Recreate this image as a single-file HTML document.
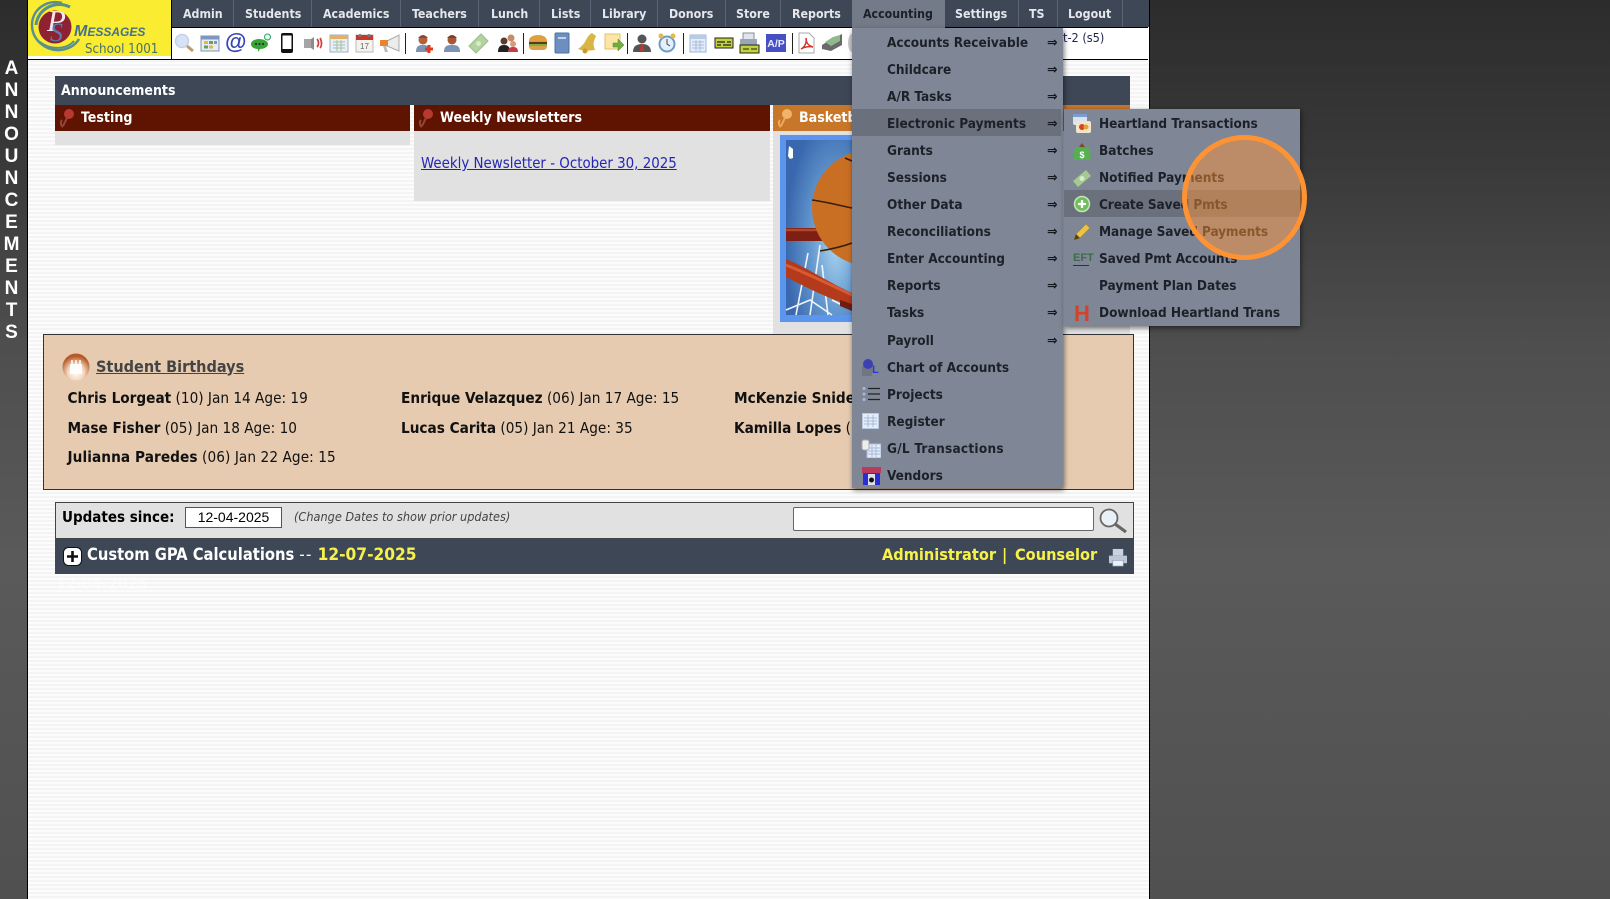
<!DOCTYPE html>
<html><head><meta charset="utf-8"><title>PS Messages</title>
<style>
html,body{margin:0;padding:0;width:1610px;height:899px;overflow:hidden}
body{position:relative;background:linear-gradient(180deg,#2c2c2c 0,#383838 150px,#4e4e4e 344px,#5a5a5a 560px,#505050 899px);font-family:"DejaVu Sans Condensed","DejaVu Sans",sans-serif;font-stretch:condensed;color:#000}
.a,.t,svg{position:absolute}
.t{white-space:nowrap}
.t,svg{filter:blur(.3px)}
.b{font-weight:bold}
.n{top:0;height:27px;line-height:29px;font-size:12.3px;font-weight:bold;color:#e4e7ec}
.s{top:0;width:1px;height:27px;background:#596373}
.v{left:0;width:23px;text-align:center;font:bold 19px "Liberation Sans",sans-serif;color:#fff;height:22px;line-height:22px}
.m{height:27px;line-height:30px;font-size:13.5px;font-weight:bold;color:#1c2028}
.ar{left:1047px;height:27px;line-height:30px;font-size:14px;font-weight:bold;color:#15181e}
.h{top:105px;height:26px;line-height:27px;font-size:14.1px;font-weight:bold;color:#fff}
.nm{font-size:15.2px;height:20px;line-height:20px;color:#111}
.tb{top:32px;width:22px;height:22px}
.sep{top:33px;width:1px;height:21px;background:#222}
</style></head><body>

<!-- sidebar -->
<div class="t v" style="top:58px">A</div><div class="t v" style="top:80px">N</div><div class="t v" style="top:102px">N</div><div class="t v" style="top:124px">O</div><div class="t v" style="top:146px">U</div><div class="t v" style="top:168px">N</div><div class="t v" style="top:190px">C</div><div class="t v" style="top:212px">E</div><div class="t v" style="top:234px">M</div><div class="t v" style="top:256px">E</div><div class="t v" style="top:278px">N</div><div class="t v" style="top:300px">T</div><div class="t v" style="top:322px">S</div>

<!-- main panel -->
<div class="a" style="left:27px;top:0;width:1121px;height:899px;border-left:1px solid #000;border-right:1px solid #000;background:repeating-linear-gradient(180deg,#f4f4f4 0,#f4f4f4 2px,#fcfcfc 2px,#fcfcfc 4px)"></div>

<!-- logo -->
<div class="a" style="left:28px;top:0;width:143px;height:56px;background:#f9ec31"></div>
<div class="a" style="left:28px;top:56px;width:1120px;height:3px;background:#fff"></div>
<svg style="left:28px;top:0" width="143" height="56" viewBox="0 0 143 56">
<path d="M34 3C18-1 4 10 4 25c0 15 14 26 28 25 10-1 16-6 19-11" fill="none" stroke="#5a8f8c" stroke-width="2.5"/>
<path d="M42 7C28 0 10 8 8 25" fill="none" stroke="#5a8f8c" stroke-width="3"/>
<path d="M12 42c10 8 26 8 34-1" fill="none" stroke="#5a8f8c" stroke-width="2"/>
<circle cx="27" cy="27" r="16.5" fill="#8e2232"/>
<text x="19" y="31" font-family="Liberation Serif,serif" font-style="italic" font-size="31" fill="#f3e6ea">P</text>
<text x="22" y="41" font-family="Liberation Serif,serif" font-style="italic" font-size="26" fill="#5a7db5">S</text>
<text x="46" y="36" font-family="Liberation Sans,sans-serif" font-style="italic" font-weight="bold" font-size="16" fill="#457091">M<tspan font-size="12">ESSAGES</tspan></text>
<text x="57" y="53" font-family="DejaVu Sans Condensed,DejaVu Sans,sans-serif" font-stretch="condensed" font-size="13.2" fill="#47706a">School 1001</text>
</svg>

<!-- nav -->
<div class="a" style="left:171px;top:0;width:977px;height:27px;background:#3e4755;border-left:1px solid #000"></div>
<div class="a" style="left:171px;top:27px;width:977px;height:1px;background:#000"></div>
<div class="a" style="left:171px;top:28px;width:977px;height:31px;background:#fff;border-left:1px solid #000"></div>
<div class="a" style="left:28px;top:59px;width:1120px;height:1px;background:#000"></div>
<div class="a" style="left:852px;top:0;width:93px;height:28px;background:#747b88"></div>

<div class="t n" style="left:183px">Admin</div><div class="a s" style="left:233px"></div>
<div class="t n" style="left:245px">Students</div><div class="a s" style="left:311px"></div>
<div class="t n" style="left:323px">Academics</div><div class="a s" style="left:400px"></div>
<div class="t n" style="left:412px">Teachers</div><div class="a s" style="left:478px"></div>
<div class="t n" style="left:491px">Lunch</div><div class="a s" style="left:539px"></div>
<div class="t n" style="left:551px">Lists</div><div class="a s" style="left:590px"></div>
<div class="t n" style="left:602px">Library</div><div class="a s" style="left:657px"></div>
<div class="t n" style="left:669px">Donors</div><div class="a s" style="left:725px"></div>
<div class="t n" style="left:736px">Store</div><div class="a s" style="left:780px"></div>
<div class="t n" style="left:792px">Reports</div>
<div class="t n" style="left:863px;color:#1c2028">Accounting</div>
<div class="t n" style="left:955px">Settings</div><div class="a s" style="left:1018px"></div>
<div class="t n" style="left:1029px">TS</div><div class="a s" style="left:1057px"></div>
<div class="t n" style="left:1068px">Logout</div><div class="a s" style="left:1122px"></div>
<div class="t" style="left:1063px;top:29px;height:18px;line-height:18px;font-size:12.600px;color:#1d2550">t-2 (s5)</div>

<!-- toolbar icons -->
<svg class="tb" style="left:173px" viewBox="0 0 22 22"><circle cx="9" cy="9" r="6.5" fill="#d5e3f5" stroke="#c3d2e6" stroke-width="1.500"/><path d="M14 14l6 5" stroke="#c59a6a" stroke-width="3"/></svg>
<svg class="tb" style="left:199px" viewBox="0 0 22 22"><rect x="2" y="4" width="18" height="15" fill="#e6edf7" stroke="#7d93b5"/><rect x="2" y="4" width="18" height="3.5" fill="#7f97bd"/><rect x="5" y="9" width="4" height="3" fill="#e7b93a"/><rect x="10" y="9" width="4" height="3" fill="#5fa35f"/><rect x="15" y="9" width="3" height="3" fill="#7f97bd"/><rect x="5" y="13.5" width="4" height="3" fill="#5fa35f"/><rect x="10" y="13.5" width="4" height="3" fill="#e7b93a"/></svg>
<div class="t" style="left:225px;top:28px;font:bold 22px/28px 'Liberation Sans',sans-serif;color:#3643b5">@</div>
<svg class="tb" style="left:250px" viewBox="0 0 22 22"><path d="M1 12c0-3 4-5 8-5s9 2 9 5-4 5-8 5l-2 3v-3c-4 0-7-2-7-5z" fill="#3aa336"/><circle cx="6" cy="12" r="1" fill="#123"/><circle cx="9.5" cy="12" r="1" fill="#123"/><circle cx="13" cy="12" r="1" fill="#123"/><circle cx="17.5" cy="5" r="3" fill="#dfe" stroke="#396"/></svg>
<svg class="tb" style="left:276px" viewBox="0 0 22 22"><rect x="5" y="1" width="12" height="20" rx="2" fill="#111"/><rect x="6.5" y="3.5" width="9" height="13.5" fill="#fff"/></svg>
<svg class="tb" style="left:302px" viewBox="0 0 22 22"><path d="M2 7h7v9H2z" fill="#a5a5a5"/><path d="M9 7l3-2v13l-3-2z" fill="#8c8c8c"/><path d="M15 7c2 2 2 6 0 8M18 6c2 3 2 8 0 10" fill="none" stroke="#d0403e" stroke-width="1.700"/></svg>
<svg class="tb" style="left:328px" viewBox="0 0 22 22"><rect x="2" y="3" width="18" height="17" fill="#e8eff8" stroke="#9db0c9"/><rect x="2" y="3" width="18" height="4" fill="#e3b06c"/><path d="M5 10h12M5 13h12M5 16h12M9 8v11M13 8v11" stroke="#a5c0a0"/></svg>
<svg class="tb" style="left:353px" viewBox="0 0 22 22"><rect x="3" y="3" width="17" height="17" fill="#f6f3ef" stroke="#bbb"/><rect x="3" y="3" width="17" height="5" fill="#c8372d"/><circle cx="7" cy="3.5" r="1.500" fill="#777"/><circle cx="16" cy="3.5" r="1.500" fill="#777"/><text x="7" y="17" font-size="8" fill="#666" font-family="Liberation Sans,sans-serif">17</text></svg>
<svg class="tb" style="left:379px" viewBox="0 0 22 22"><path d="M8 9l12-6v16L8 14z" fill="#ececec" stroke="#aaa"/><path d="M1 8h8v6H1z" fill="#e8842c"/><path d="M4 14l2 6h3l-2-6z" fill="#bbb"/></svg>
<div class="a sep" style="left:405px"></div>
<svg class="tb" style="left:413px" viewBox="0 0 22 22"><circle cx="10" cy="8" r="4.500" fill="#b4603c"/><path d="M5 6q5-6 10 0z" fill="#8a4a30"/><path d="M3 20c0-6 3-7 7-7s7 1 7 7z" fill="#7b93b5"/><path d="M16 13v8M12 17h8" stroke="#e03a25" stroke-width="3"/></svg>
<svg class="tb" style="left:441px" viewBox="0 0 22 22"><circle cx="11" cy="8" r="4.500" fill="#a8583a"/><path d="M6 6q5-6 10 0z" fill="#7a4028"/><path d="M3 20c0-6 3-7 8-7s8 1 8 7z" fill="#7b93b5"/></svg>
<svg class="tb" style="left:467px" viewBox="0 0 22 22"><path d="M2 14L14 2l7 7-12 12z" fill="#b3d3a0" stroke="#9cbd8a"/><circle cx="11.5" cy="11.5" r="2.500" fill="#d6ebc8"/></svg>
<svg class="tb" style="left:497px" viewBox="0 0 22 22"><circle cx="7" cy="9" r="3.5" fill="#5d3b2a"/><path d="M1 20c0-5 2-7 6-7s6 2 6 7z" fill="#222"/><circle cx="14" cy="6" r="3.5" fill="#c98a66"/><circle cx="16" cy="12" r="3" fill="#d99a7a"/><path d="M11 20c0-4 2-5 5-5s5 1 5 5z" fill="#c83a4a"/></svg>
<div class="a sep" style="left:523px"></div>
<svg class="tb" style="left:527px" viewBox="0 0 22 22"><path d="M2 9c0-4 4-6 9-6s9 2 9 6z" fill="#e0a040"/><rect x="2" y="9.500" width="18" height="2.500" fill="#5c3a1c"/><rect x="2" y="12" width="18" height="2" fill="#7fae3c"/><path d="M2 14h18c0 3-2 4-4 4H6c-2 0-4-1-4-4z" fill="#dca04a"/></svg>
<svg class="tb" style="left:551px" viewBox="0 0 22 22"><rect x="4" y="1" width="14" height="20" rx="1" fill="#6d8fbf" stroke="#50709f"/><rect x="7" y="5" width="8" height="2" fill="#c3d3e8"/></svg>
<svg class="tb" style="left:576px" viewBox="0 0 22 22"><path d="M16 1l4 3-2 5c-1 3 0 6 1 9C13 19 7 19 2 17c3-2 6-5 8-9s4-6 6-7z" fill="#d9b544"/><circle cx="9" cy="19" r="2.500" fill="#c99a2a"/></svg>
<svg class="tb" style="left:603px" viewBox="0 0 22 22"><rect x="2" y="2" width="15" height="15" fill="#fbe6a6" stroke="#e0c070"/><path d="M10 11h5V7l6 6-6 6v-4h-5z" fill="#6fae3f" stroke="#4d8a2a" stroke-width=".5"/></svg>
<div class="a sep" style="left:627px"></div>
<svg class="tb" style="left:631px" viewBox="0 0 22 22"><circle cx="11" cy="7" r="4.500" fill="#555"/><path d="M2 20c0-6 4-8 9-8s9 2 9 8z" fill="#555"/><path d="M10 12h2l1 7h-4z" fill="#c0392b"/></svg>
<svg class="tb" style="left:656px" viewBox="0 0 22 22"><circle cx="11" cy="12" r="7.500" fill="#e6f0fa" stroke="#6d9bc7" stroke-width="2"/><path d="M11 7v5l3 2" stroke="#345" fill="none"/><circle cx="5" cy="4" r="2.500" fill="#e3b94a"/><circle cx="17" cy="4" r="2.500" fill="#e3b94a"/></svg>
<div class="a sep" style="left:683px"></div>
<svg class="tb" style="left:687px" viewBox="0 0 22 22"><rect x="3" y="3" width="16" height="17" fill="#e4edf9" stroke="#9db3d3"/><rect x="3" y="3" width="16" height="4" fill="#b9cce6"/><path d="M5 10h12M5 13h12M5 16h12M9 8v11M13 8v11" stroke="#a9bedb"/></svg>
<svg class="tb" style="left:713px" viewBox="0 0 22 22"><rect x="2" y="6" width="18" height="10" fill="#c2d23d" stroke="#222"/><path d="M4 10h8M14 10h4M4 13h4M10 13h8" stroke="#222" stroke-width="1.200"/></svg>
<svg class="tb" style="left:738px" viewBox="0 0 22 22"><rect x="5" y="1" width="11" height="9" fill="#dfe6ef" stroke="#889"/><rect x="2" y="7" width="17" height="7" fill="#9aa6b5"/><rect x="2" y="13" width="19" height="8" fill="#c2d23d" stroke="#222"/><path d="M5 17h6M13 17h6" stroke="#222"/></svg>
<svg class="tb" style="left:765px" viewBox="0 0 22 22"><rect x="1" y="2" width="20" height="18" fill="#4650c4"/><text x="11" y="15" text-anchor="middle" font-family="Liberation Sans,sans-serif" font-weight="bold" font-size="10.500" fill="#e8eaff">A/P</text></svg>
<div class="a sep" style="left:792px"></div>
<svg class="tb" style="left:795px" viewBox="0 0 22 22"><path d="M4 1h10l5 5v15H4z" fill="#fff" stroke="#aaa"/><path d="M6 17c4-2 6-7 5-11 0 5 3 8 7 9-4-1-9 0-12 2z" fill="none" stroke="#d0342c" stroke-width="1.500"/></svg>
<svg class="tb" style="left:821px" viewBox="0 0 22 22"><path d="M1 13l8-5 12-6v11l-11 6-9-2z" fill="#6a6a6a"/><path d="M4 10l8-5 7-2v6l-9 5z" fill="#8fb98a"/></svg>
<div class="a" style="left:848px;top:34px;width:8px;height:18px;border-radius:50%;background:#c9c9c9"></div>

<!-- announcements -->
<div class="a" style="left:55px;top:76px;width:1075px;height:29px;background:#3e4755"></div>
<div class="t b" style="left:61px;top:77px;height:29px;line-height:29px;font-size:14px;color:#fff">Announcements</div>
<div class="a" style="left:55px;top:105px;width:355px;height:26px;background:#5e1400"></div>
<div class="a" style="left:55px;top:131px;width:355px;height:14px;background:#e1e1e1"></div>
<div class="a" style="left:414px;top:105px;width:356px;height:26px;background:#5e1400"></div>
<div class="a" style="left:414px;top:131px;width:356px;height:70px;background:#e1e1e1"></div>
<div class="a" style="left:773px;top:105px;width:357px;height:26px;background:#c7762a"></div>
<div class="a" style="left:773px;top:131px;width:357px;height:203px;background:#e1e1e1"></div>
<svg style="left:59px;top:107px" width="16" height="22" viewBox="0 0 16 22"><circle cx="10" cy="7" r="5" fill="#b8392d"/><path d="M8 11l-4 8M3 13c-2 2-1 6 1 7" stroke="#93453a" stroke-width="2" fill="none"/></svg>
<svg style="left:418px;top:107px" width="16" height="22" viewBox="0 0 16 22"><circle cx="10" cy="7" r="5" fill="#b8392d"/><path d="M8 11l-4 8M3 13c-2 2-1 6 1 7" stroke="#93453a" stroke-width="2" fill="none"/></svg>
<svg style="left:777px;top:107px" width="16" height="22" viewBox="0 0 16 22"><circle cx="10" cy="7" r="5" fill="#f1b26a"/><path d="M8 11l-4 8M3 13c-2 2-1 6 1 7" stroke="#f0a75a" stroke-width="2" fill="none"/></svg>
<div class="t h" style="left:81px">Testing</div>
<div class="t h" style="left:440px">Weekly Newsletters</div>
<div class="t h" style="left:799px;width:53px;overflow:hidden">Basketball</div>
<div class="t" style="left:421px;top:153px;height:20px;line-height:20px;font-size:14.9px;color:#2525b5;text-decoration:underline">Weekly Newsletter - October 30, 2025</div>

<!-- basketball image -->
<svg style="left:780px;top:135px" width="72" height="187" viewBox="0 0 72 187">
<defs><radialGradient id="g" cx="75%" cy="60%" r="75%"><stop offset="0" stop-color="#a8d4ee"/><stop offset=".5" stop-color="#6498cf"/><stop offset="1" stop-color="#3a68ae"/></radialGradient></defs>
<rect width="72" height="187" fill="#5b95ee"/>
<rect x="6" y="5" width="66" height="175" fill="url(#g)"/>
<path d="M6 93h40v13H6z" fill="#7d1f12"/>
<path d="M6 95h40" stroke="#b2452a" stroke-width="2.500"/>
<path d="M28 118l-12 62M40 110L30 180M42 130l6 50M6 175l24-10 22 15M52 165l20 10" stroke="#eef4f8" stroke-width="1.600" fill="none"/>
<circle cx="90" cy="73" r="58" fill="#c96f24"/>
<path d="M32 65c15 2 30 6 40 8M40 116c12-2 24-5 32-8M65 23l7 3" stroke="#3a1d0a" stroke-width="1.600" fill="none"/>
<path d="M6 124c20 8 40 22 66 34v13C46 163 22 150 6 142z" fill="#b33a1b"/>
<path d="M6 130c20 8 45 20 66 30" stroke="#d85a32" stroke-width="3" fill="none"/>
<path d="M60 165l12 4v7l-12-5z" fill="#6f1d0f"/>
<path d="M9 11l4 3v9l-3 1-2-3z" fill="#fff"/>
</svg>

<!-- birthdays -->
<div class="a" style="left:43px;top:334px;width:1089px;height:154px;background:#e6cbb0;border:1px solid #333"></div>
<svg style="left:62px;top:353px" width="28" height="29" viewBox="0 0 28 29"><defs><radialGradient id="c" cx="50%" cy="70%" r="60%"><stop offset="0" stop-color="#fff"/><stop offset=".5" stop-color="#f3d9c0"/><stop offset="1" stop-color="#b65a26"/></radialGradient></defs><circle cx="14" cy="14" r="13.500" fill="url(#c)"/><rect x="8" y="11" width="12" height="10" fill="#fff" opacity=".9"/><path d="M10 7v4M14 7v4M18 7v4" stroke="#fff" stroke-width="1.500"/></svg>
<div class="t b" style="left:96px;top:356.500px;height:20px;line-height:20px;font-size:16.100px;color:#444;text-decoration:underline">Student Birthdays</div>
<div class="t nm" style="left:67.500px;top:388px"><b>Chris Lorgeat</b> (10) Jan 14 Age: 19</div>
<div class="t nm" style="left:67.500px;top:418px"><b>Mase Fisher</b> (05) Jan 18 Age: 10</div>
<div class="t nm" style="left:67.500px;top:447px;letter-spacing:.08px"><b>Julianna Paredes</b> (06) Jan 22 Age: 15</div>
<div class="t nm" style="left:401px;top:388px"><b>Enrique Velazquez</b> (06) Jan 17 Age: 15</div>
<div class="t nm" style="left:401px;top:418px"><b>Lucas Carita</b> (05) Jan 21 Age: 35</div>
<div class="t nm" style="left:734px;top:388px"><b>McKenzie Snider</b></div>
<div class="t nm" style="left:734px;top:418px"><b>Kamilla Lopes</b> (</div>

<!-- updates -->
<div class="a" style="left:55px;top:502px;width:1079px;height:37px;background:#e1e1e1;box-shadow:inset 0 0 0 1px #444"></div>
<div class="t b" style="left:62px;top:507px;height:20px;line-height:20px;font-size:15px">Updates since:</div>
<div class="a" style="left:185px;top:507px;width:95px;height:19px;background:#fff;border:1px solid #555;font:14px/19px 'Liberation Sans',sans-serif;text-align:center">12-04-2025</div>
<div class="t" style="left:294px;top:508px;height:18px;line-height:18px;font-size:12.600px;font-style:italic;color:#444">(Change Dates to show prior updates)</div>
<div class="a" style="left:793px;top:507px;width:299px;height:22px;background:#fff;border:1px solid #666;border-radius:2px"></div>
<svg style="left:1098px;top:508px" width="30" height="26" viewBox="0 0 30 26"><circle cx="11" cy="10" r="8.500" fill="#eaf1f6" stroke="#666" stroke-width="1.800"/><path d="M17 16l11 8" stroke="#666" stroke-width="3.200"/></svg>
<div class="a" style="left:55px;top:539px;width:1079px;height:35px;background:#3e4755"></div>
<svg style="left:63px;top:547px" width="19" height="19" viewBox="0 0 19 19"><rect x=".5" y=".5" width="18" height="18" rx="5" fill="#fff" stroke="#111"/><path d="M9.500 4v11M4 9.500h11" stroke="#111" stroke-width="2.600"/></svg>
<div class="t b" style="left:87px;top:544px;height:22px;line-height:22px;font-size:16.400px;color:#fff">Custom GPA Calculations <span style="font-weight:normal;letter-spacing:1.200px">--</span> <span style="color:#f6f24a;font-size:17.200px">12-07-2025</span></div>
<div class="t b" style="left:882px;top:544px;height:22px;line-height:22px;font-size:16.200px;color:#f6f24a">Administrator</div>
<div class="t b" style="left:1002px;top:544px;height:22px;line-height:22px;font-size:16.200px;color:#f6f24a">|</div>
<div class="t b" style="left:1015px;top:544px;height:22px;line-height:22px;font-size:16.200px;color:#f6f24a">Counselor</div>
<svg style="left:1108px;top:548px" width="20" height="19" viewBox="0 0 21 20"><rect x="5" y="1" width="11" height="7" fill="#c8d3e0"/><path d="M1 8h19v8H1z" fill="#b9c7d8"/><rect x="5" y="13" width="11" height="6" fill="#eef2f6" stroke="#8fa0b5" stroke-width=".7"/></svg>
<div class="t b" style="left:56px;top:574px;height:20px;line-height:20px;font-size:16px;color:#fff;opacity:.4">12-04-2025</div>

<!-- accounting menu -->
<div class="a" style="left:852px;top:28px;width:211px;height:460px;background:#7f8796;box-shadow:1px 2px 5px rgba(0,0,0,.55)"></div>
<div class="a" style="left:852px;top:109px;width:209px;height:27px;background:#6a717d"></div>
<div class="t m" style="left:887px;top:28px">Accounts Receivable</div><div class="t ar" style="top:28px">⇒</div>
<div class="t m" style="left:887px;top:55px">Childcare</div><div class="t ar" style="top:55px">⇒</div>
<div class="t m" style="left:887px;top:82px">A/R Tasks</div><div class="t ar" style="top:82px">⇒</div>
<div class="t m" style="left:887px;top:109px">Electronic Payments</div><div class="t ar" style="top:109px">⇒</div>
<div class="t m" style="left:887px;top:136px">Grants</div><div class="t ar" style="top:136px">⇒</div>
<div class="t m" style="left:887px;top:163px">Sessions</div><div class="t ar" style="top:163px">⇒</div>
<div class="t m" style="left:887px;top:190px">Other Data</div><div class="t ar" style="top:190px">⇒</div>
<div class="t m" style="left:887px;top:217px">Reconciliations</div><div class="t ar" style="top:217px">⇒</div>
<div class="t m" style="left:887px;top:244px">Enter Accounting</div><div class="t ar" style="top:244px">⇒</div>
<div class="t m" style="left:887px;top:271px">Reports</div><div class="t ar" style="top:271px">⇒</div>
<div class="t m" style="left:887px;top:298px">Tasks</div><div class="t ar" style="top:298px">⇒</div>
<div class="t m" style="left:887px;top:326px">Payroll</div><div class="t ar" style="top:326px">⇒</div>
<div class="t m" style="left:887px;top:353px">Chart of Accounts</div>
<div class="t m" style="left:887px;top:380px">Projects</div>
<div class="t m" style="left:887px;top:407px">Register</div>
<div class="t m" style="left:887px;top:434px;letter-spacing:.25px">G/L Transactions</div>
<div class="t m" style="left:887px;top:461px">Vendors</div>
<svg style="left:861px;top:358px" width="20" height="18" viewBox="0 0 20 18"><rect x="1" y="8" width="10" height="10" fill="#666" opacity=".5"/><circle cx="7" cy="6" r="5" fill="#3a40b0"/><text x="11" y="15" font-family="Liberation Sans,sans-serif" font-weight="bold" font-size="11" fill="#2a35d5">L</text></svg>
<svg style="left:861px;top:386px" width="20" height="16" viewBox="0 0 20 16"><path d="M7 2.500h12M7 8h12M7 13.500h12" stroke="#222" stroke-width="1.200"/><circle cx="3" cy="2.500" r="1.500" fill="#a9b8e0"/><circle cx="3" cy="8" r="1.500" fill="#a9b8e0"/><circle cx="3" cy="13.500" r="1.500" fill="#a9b8e0"/></svg>
<svg style="left:862px;top:413px" width="18" height="17" viewBox="0 0 18 17"><rect x=".5" y=".5" width="16" height="15" fill="#e6edf9" stroke="#b9c8e0"/><path d="M2 5h13M2 8h13M2 11h13M6 2v12M11 2v12" stroke="#a5bad9"/></svg>
<svg style="left:861px;top:439px" width="20" height="19" viewBox="0 0 20 19"><rect x="6" y="5" width="14" height="14" fill="#e6edf9" stroke="#a5bad9"/><path d="M7 9h12M7 12h12M7 15h12M11 6v12M15 6v12" stroke="#a5bad9"/><rect x="1" y="1" width="7" height="10" rx="2" fill="#eee" stroke="#aaa"/></svg>
<svg style="left:862px;top:466px" width="19" height="19" viewBox="0 0 19 19"><rect x="1" y="7" width="17" height="12" fill="#2a2ed0"/><rect x="6" y="8" width="7" height="11" fill="#dde"/><circle cx="9.500" cy="14" r="2.500" fill="#111"/><path d="M0 1h19v6H0z" fill="#b83a5c"/></svg>

<!-- submenu -->
<div class="a" style="left:1064px;top:109px;width:236px;height:217px;background:#7f8796;box-shadow:1px 2px 5px rgba(0,0,0,.55)"></div>
<div class="a" style="left:1064px;top:190px;width:236px;height:27px;background:#6a717d"></div>
<div class="t m" style="left:1099px;top:109px">Heartland Transactions</div>
<div class="t m" style="left:1099px;top:136px">Batches</div>
<div class="t m" style="left:1099px;top:163px">Notified Payments</div>
<div class="t m" style="left:1099px;top:190px;letter-spacing:-.1px">Create Saved Pmts</div>
<div class="t m" style="left:1099px;top:217px;letter-spacing:-.1px">Manage Saved Payments</div>
<div class="t m" style="left:1099px;top:244px;letter-spacing:-.1px">Saved Pmt Accounts</div>
<div class="t m" style="left:1099px;top:271px">Payment Plan Dates</div>
<div class="t m" style="left:1099px;top:298px">Download Heartland Trans</div>
<svg style="left:1072px;top:113px" width="20" height="21" viewBox="0 0 20 21"><rect x="1" y="1" width="14" height="11" rx="2" fill="#d9e3f3"/><rect x="1" y="1" width="14" height="3" fill="#7c9cd0"/><rect x="4" y="8" width="15" height="12" rx="2" fill="#f2e6c8"/><circle cx="10" cy="14" r="3" fill="#d6402f"/><circle cx="14" cy="14" r="2.500" fill="#e7a32f"/></svg>
<svg style="left:1072px;top:141px" width="20" height="20" viewBox="0 0 20 20"><path d="M3 7h14l2 12H1z" fill="#55b052"/><path d="M7 6l3-4 3 4" fill="#7a4a2a"/><text x="10" y="17" text-anchor="middle" font-family="Liberation Sans,sans-serif" font-weight="bold" font-size="9" fill="#fff">$</text></svg>
<svg style="left:1072px;top:168px" width="20" height="20" viewBox="0 0 20 20"><path d="M1 13L14 2l5 6L6 19z" fill="#a5c98f"/><circle cx="10" cy="10.500" r="2.500" fill="#d6ebc8"/></svg>
<svg style="left:1073px;top:195px" width="18" height="18" viewBox="0 0 18 18"><circle cx="9" cy="9" r="7.500" fill="#6fbf5f" stroke="#c5e5b8" stroke-width="1.500"/><path d="M9 5v8M5 9h8" stroke="#fff" stroke-width="2.200"/></svg>
<svg style="left:1073px;top:223px" width="18" height="18" viewBox="0 0 18 18"><path d="M1 17l2-6L13 1l4 4L7 15z" fill="#eac34a" stroke="#a87f25" stroke-width=".6"/><path d="M1 17l2-6 4 4z" fill="#50421f"/></svg>
<div class="t" style="left:1073px;top:247px;height:22px;font:bold 11px/22px 'Liberation Sans',sans-serif;color:#3b6d4a">EFT</div>
<div class="a" style="left:1073px;top:265px;width:16px;height:1px;background:#333"></div>
<div class="t" style="left:1074px;top:302px;font:bold 22px/24px 'Liberation Sans',sans-serif;color:#d1432a">H</div>

<!-- highlight circle -->
<div class="a" style="left:1182px;top:135px;width:115px;height:115px;border:5px solid #ff9333;border-radius:50%;background:rgba(255,147,51,.47)"></div>

</body></html>
